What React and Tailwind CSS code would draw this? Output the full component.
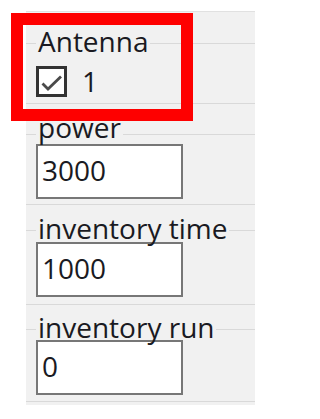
export default function App() {
  return (
    <div className="relative w-[269px] h-[419px] overflow-hidden bg-white pt-[11px] pl-[26px] font-['Open_Sans',sans-serif] font-medium text-[28px] text-[#1a1a22]">
      <div className="w-[229px] h-[394px] bg-[#f1f1f1] border-t border-[#e1e1e1] pt-[17px]">
        <Group label="Antenna" contentTop="mt-[9px]" bottomGap="mt-[3px]">
          <div className="flex items-center ml-[10px]">
            <div className="relative w-[31px] h-[31px] border-[3px] border-[#333] bg-white">
              <svg className="absolute -left-[3px] -top-[3px]" width="31" height="31" viewBox="0 0 31 31">
                <polyline points="6.5,17.5 12,23 25,10.5" fill="none" stroke="#4a4a4a" strokeWidth="2.8" />
              </svg>
            </div>
            <span className="ml-[15px] leading-[38px]">1</span>
          </div>
        </Group>
        <Group label="power" labelClass="relative -top-[5px]" className="mt-[16px]" contentTop="mt-0" bottomGap="mt-[5px]">
          <Field value="3000" />
        </Group>
        <Group label="inventory time" className="mt-[11px]" contentTop="mt-[2px]" bottomGap="mt-[7px]">
          <Field value="1000" />
        </Group>
        <Group label="inventory run" className="mt-[10px]" contentTop="mt-[1px]" bottomGap="mt-[6px]">
          <Field value="0" />
        </Group>
      </div>

      <div className="absolute left-[11px] top-[13px] w-[182px] h-[108px] border-[12px] border-[#fe0000]" />
    </div>
  );
}

function Group({ label, labelClass = "", className = "", contentTop, bottomGap, children }) {
  return (
    <div className={className}>
      <div className="flex items-start h-[24px]">
        <div className="w-[10px] h-px mt-[14px] bg-[#d9d9d9]" />
        <span className={`px-[2px] leading-[24px] whitespace-nowrap ${labelClass}`}>{label}</span>
        <div className="flex-1 h-px mt-[14px] bg-[#d9d9d9]" />
      </div>
      <div className={contentTop}>{children}</div>
      <div className={`${bottomGap} h-px bg-[#d9d9d9]`} />
    </div>
  );
}

function Field({ value }) {
  return (
    <div className="ml-[10px] w-[147px] h-[55px] border-2 border-[#777] bg-white flex items-center pl-[4px] pb-[4px]">
      <span className="leading-[38px]">{value}</span>
    </div>
  );
}
